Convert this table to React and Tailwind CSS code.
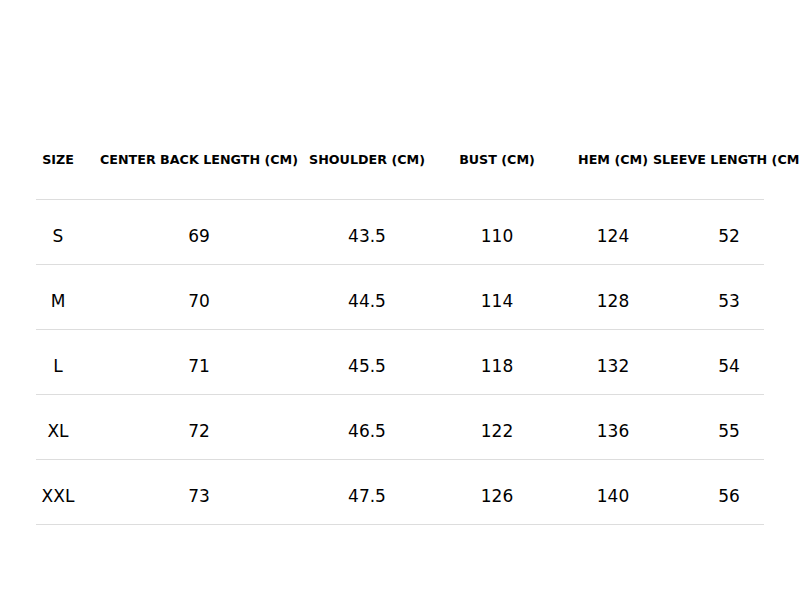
import React from 'react';

const headers = ['SIZE', 'CENTER BACK LENGTH (CM)', 'SHOULDER (CM)', 'BUST (CM)', 'HEM (CM)', 'SLEEVE LENGTH (CM)'];

const rows = [
    ['S', '69', '43.5', '110', '124', '52'],
    ['M', '70', '44.5', '114', '128', '53'],
    ['L', '71', '45.5', '118', '132', '54'],
    ['XL', '72', '46.5', '122', '136', '55'],
    ['XXL', '73', '47.5', '126', '140', '56'],
];

// column widths picked so each value sits centred where the chart has it
const cols = 'grid grid-cols-[44px_238px_98px_162px_70px_162px]';

export default function App() {
    return (
        <div className="w-[800px] h-[600px] overflow-hidden bg-white text-black font-['DejaVu_Sans',sans-serif]">
            <div className="mx-[36px] pt-[120px] w-[728px]">
                <div className={`${cols} h-[80px] border-b border-[#dddddd] items-center`}>
                    {headers.map(h => (
                        <div key={h} className="flex justify-center whitespace-nowrap text-[12.7px] font-bold">
                            {h}
                        </div>
                    ))}
                </div>
                {rows.map(r => (
                    <div key={r[0]} className={`${cols} h-[65px] pt-[10px] border-b border-[#dddddd] items-center`}>
                        {r.map((v, i) => (
                            <div key={i} className="flex justify-center whitespace-nowrap text-[17px]">
                                {v}
                            </div>
                        ))}
                    </div>
                ))}
            </div>
        </div>
    );
}
